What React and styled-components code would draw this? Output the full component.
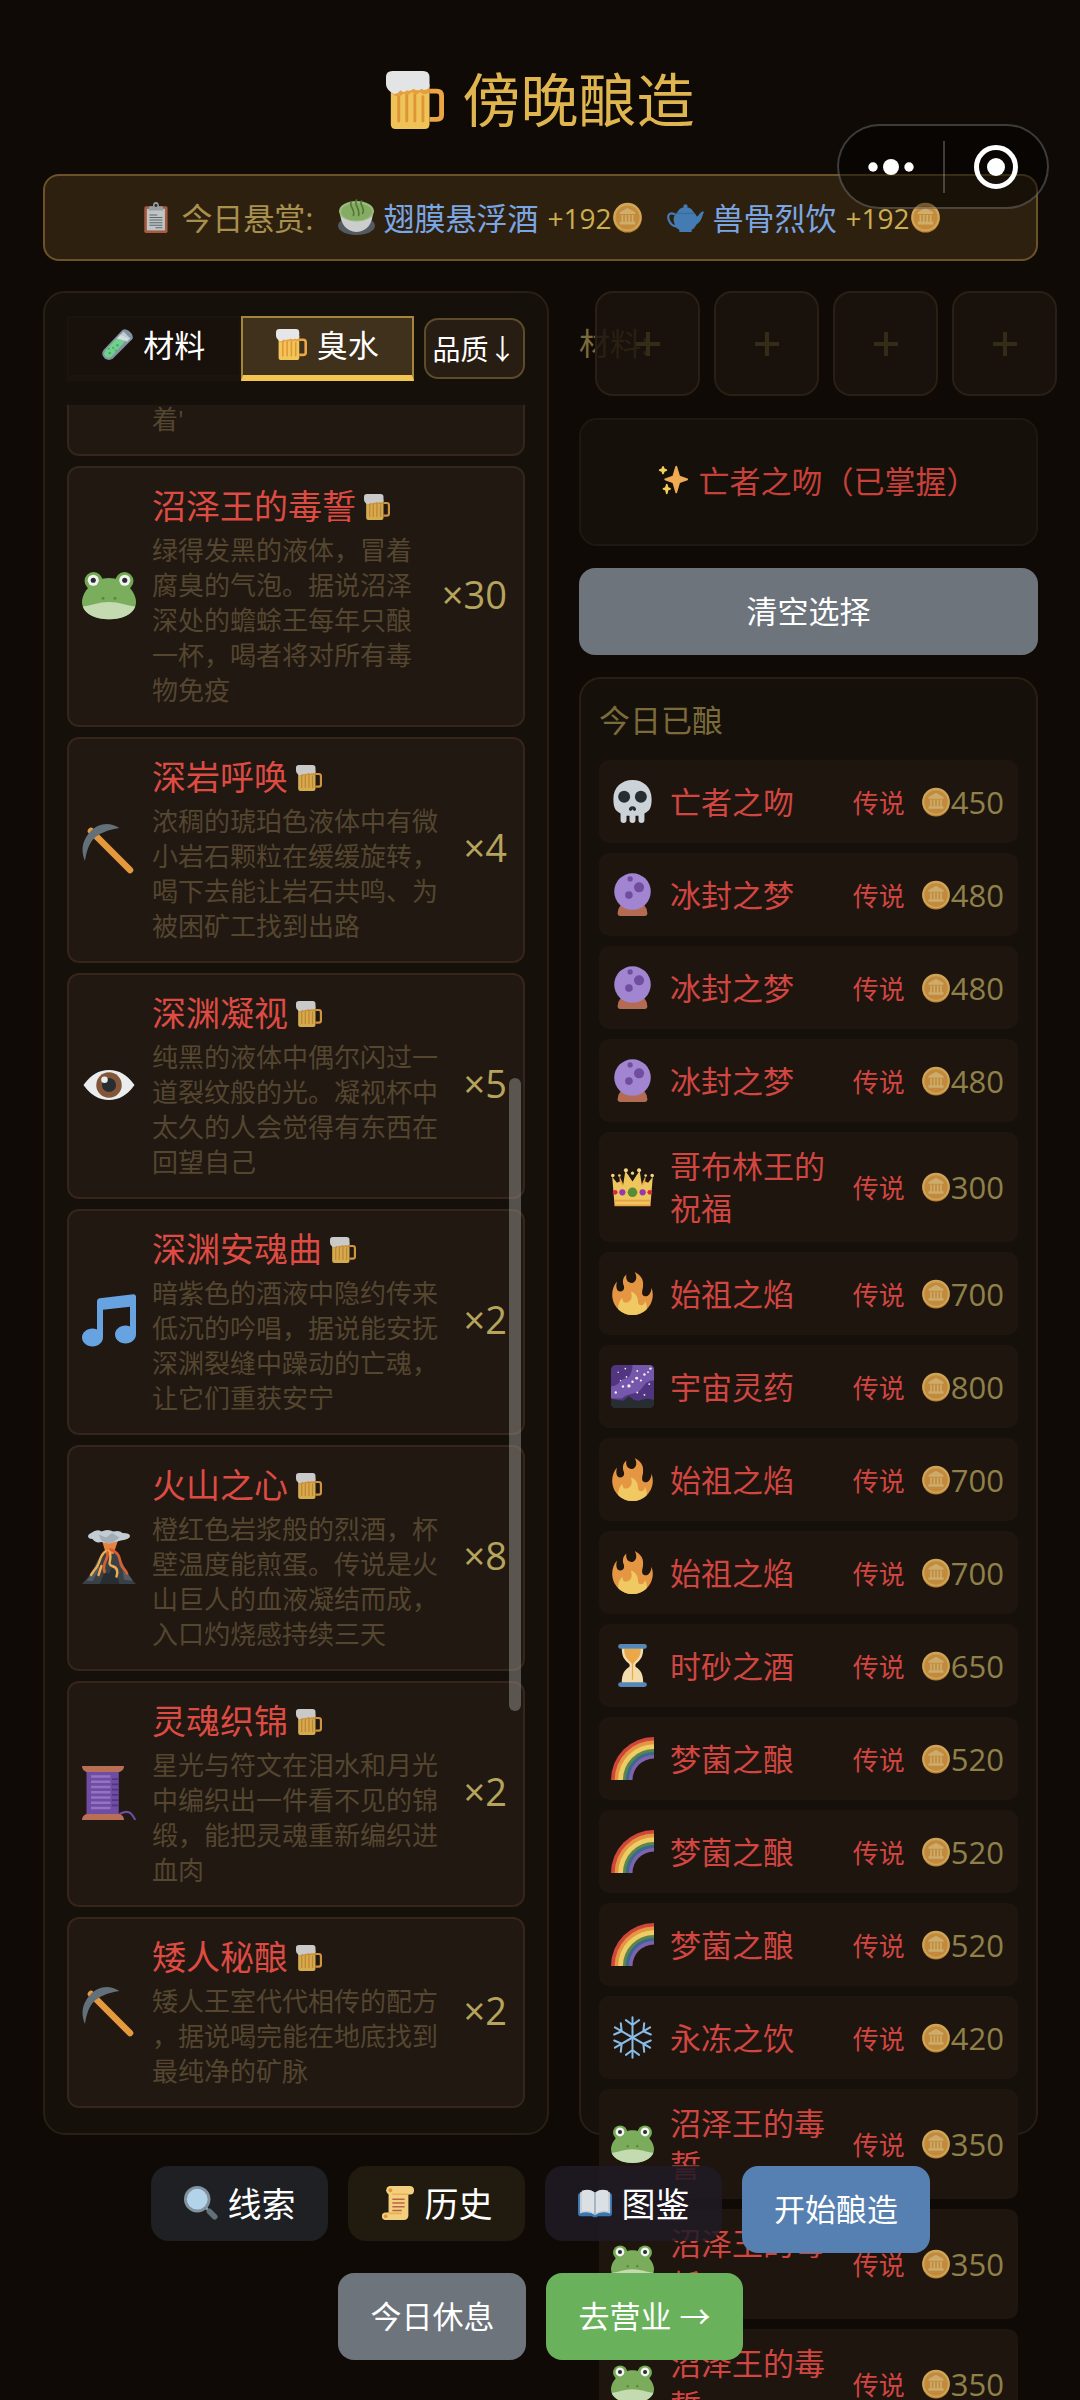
import { styled, createGlobalStyle } from "styled-components";

const GlobalStyle = createGlobalStyle`
  * {
    box-sizing: border-box;
  }

  body {
    margin: 0;
    background: #0f0a06;
  }

  h1, h2, h3, p, ul {
    margin: 0;
    padding: 0;
    font-weight: 400;
  }

  ul {
    list-style: none;
  }

  body, button {
    font-family: "Open Sans", "Noto Sans CJK SC", sans-serif;
  }

  button {
    border: none;
    padding: 0;
    cursor: pointer;
  }
`;

const Glyph = styled.svg`
  display: block;
  flex: none;
  width: ${({ $size }) => $size}px;
  height: ${({ $size }) => $size}px;
  opacity: ${({ $dim }) => ($dim ? 0.82 : 0.95)};
`;

const drawings = {
  beer: (
    <>
      <path fill="none" stroke="#f7ae4b" strokeWidth="3" d="M27 12.500h4.500q3 0 3 3v12q0 2.500-3 2.500H27" />
      <path fill="#fbcd5c" d="M3 8h24v25q0 3-3 3H6q-3 0-3-3z" />
      <g fill="#ea9c3c">
        <rect x="7" y="15" width="1.800" height="17" rx="0.900" />
        <rect x="12" y="14" width="1.800" height="18" rx="0.900" />
        <rect x="17" y="14" width="1.800" height="18" rx="0.900" />
        <rect x="22" y="15" width="1.800" height="17" rx="0.900" />
      </g>
      <path fill="#f0a842" d="M3 11h24v2q-3 3-6 0-2 3-5 0-2 3-5 1-4 4-8-1z" />
      <path fill="#eef0f2" d="M4 0h19q4 0 4 4v6q-2 3-5 1-2 2-5 0-2 2-4 1-2 2-4 0-3 4-6 1Q0 11 0 8V4q0-4 4-4z" />
    </>
  ),
  clipboard: (
    <>
      <rect x="5" y="5" width="27" height="31" rx="2" fill="#c1694f" />
      <path fill="#e1e8ed" d="M8 8h21v25H8z" />
      <path fill="#b0bac2" d="M12 5h3q0-5 3.500-5T22 5h3q2 0 2 2v3H10V7q0-2 2-2z" />
      <circle cx="18.500" cy="4" r="1.700" fill="#292f33" />
      <path stroke="#66757f" strokeWidth="1.200" d="M11 15h9M11 18h15M11 21h15M11 24h15M11 27h15M18 30h8" />
    </>
  ),
  tea: (
    <>
      <ellipse cx="18" cy="26" rx="18" ry="9" fill="#5a6872" />
      <path fill="#f0f4f7" d="M2 12h32c0 12-6 20-16 20S2 24 2 12z" />
      <ellipse cx="18" cy="12" rx="17" ry="10" fill="#b5dd97" />
      <ellipse cx="18" cy="12.500" rx="15" ry="8.500" fill="#98cc76" />
      <path fill="none" stroke="#5c8a42" strokeWidth="1.600" strokeLinecap="round" d="M13 3c-3 4 4 6 2 13M18 1c-3 5 4 8 2 15M23 2c-3 4 4 6 1 12" />
    </>
  ),
  teapot: (
    <>
      <path fill="none" stroke="#4a8fd6" strokeWidth="2.200" d="M8 15C2 12 0 16 2 21q2 5 8 6" />
      <path fill="#4a8fd6" d="M27 18c4 0 4-5 8-6l1 1c-2 3-2 11-10 13z" />
      <circle cx="18" cy="7" r="2" fill="#4a8fd6" />
      <path fill="#4a8fd6" d="M10 13q2-5 8-5t8 5q5 4 3 10-1 5-5 7v2H12v-2q-4-2-5-7-2-6 3-10z" />
      <path stroke="#3a78b4" strokeWidth="1" d="M9 14h18" />
    </>
  ),
  coin: (
    <>
      <circle cx="18" cy="19" r="16.500" fill="#e09d3c" />
      <circle cx="18" cy="17.500" r="16.500" fill="#f5c468" />
      <circle cx="18" cy="18" r="14" fill="#e5a447" />
      <path fill="#f3cd80" d="M18 7l9 5v2H9v-2zM11 15h2v8h-2zM15 15h2v8h-2zM19 15h2v8h-2zM23 15h2v8h-2zM9 23h18v3H9z" />
    </>
  ),
  tube: (
    <>
      <path fill="#8899a6" d="M24 1q3-2 7 1l3 3q3 4 1 7L13 34q-5 4-10 0-5-5-1-10z" />
      <path fill="#ccd6dd" d="M25 3l8 8-4 4-9-7z" />
      <path fill="#74dc92" d="M17 11l11 2-17 19q-4 3-7 0t0-7z" />
      <path fill="#e1e8ed" d="M17 11l4-4 10 4-3 3z" />
      <g fill="#4ab36c">
        <circle cx="9" cy="28" r="1.500" />
        <circle cx="13" cy="22" r="1.300" />
        <circle cx="18" cy="19" r="1.500" />
        <circle cx="16" cy="25" r="1.200" />
        <circle cx="8" cy="23" r="1.200" />
      </g>
    </>
  ),
  frog: (
    <>
      <circle cx="7.700" cy="8" r="6" fill="#77b255" />
      <circle cx="28.300" cy="8" r="6" fill="#77b255" />
      <path fill="#7fb561" d="M36 22c0 7-8 11.500-18 11.500S0 29 0 22 8 6 18 6s18 9 18 16z" />
      <path fill="#cde6bb" d="M.5 25C6 24.500 11 22 18 22s12 2.500 17.500 3c-2 5.500-9 8.500-17.500 8.500S2.500 30.500.5 25z" />
      <circle cx="7.500" cy="7.500" r="3.700" fill="#fff" />
      <circle cx="28.500" cy="7.500" r="3.700" fill="#fff" />
      <circle cx="7.500" cy="7.500" r="1.700" fill="#292f33" />
      <circle cx="28.500" cy="7.500" r="1.700" fill="#292f33" />
      <circle cx="14" cy="19.500" r="1" fill="#5c913b" />
      <circle cx="22" cy="19.500" r="1" fill="#5c913b" />
    </>
  ),
  pick: (
    <>
      <path stroke="#f0a040" strokeWidth="4.400" strokeLinecap="round" d="M6 6l26 26" />
      <path fill="#66757f" d="M25 4C17-1 10 2 6 6S-2 17 2 26c1-7 3-12 6-15S17 5 25 4z" />
    </>
  ),
  eye: (
    <>
      <path fill="#f5f8fa" d="M1 18Q8 8 18 8t17 10Q28 28 18 28T1 18z" />
      <circle cx="18" cy="18" r="8.500" fill="#8a5a3c" />
      <circle cx="18" cy="18" r="4.700" fill="#292f33" />
      <circle cx="15" cy="14.500" r="2.200" fill="#f5f8fa" />
    </>
  ),
  music: (
    <path
      fill="#6aabec"
      d="M34.209.206L11.791 2.793C10.806 2.907 10 3.811 10 4.803v18.782C9.090 23.214 8.075 23 7 23c-3.865 0-7 2.685-7 6 0 3.314 3.135 6 7 6s7-2.686 7-6V10.539l18-2.077v13.124c-.91-.372-1.925-.586-3-.586-3.865 0-7 2.685-7 6 0 3.314 3.135 6 7 6s7-2.686 7-6V1.803c0-.992-.806-1.710-1.791-1.597z"
    />
  ),
  volcano: (
    <>
      <path fill="#3b4349" d="M0 36Q6 30 9 23q3-7 7-9h5q4 2 6 9 3 8 9 13z" />
      <path fill="#292f33" d="M12 36l3-8 3 1 2-4 3 4 2 7z" />
      <path fill="#55606a" d="M5 31l5-8 2 2-5 9H3zM26 20l4 8 4 6-6-1z" />
      <path fill="#f58743" d="M13 6l11 1-3 9h-5z" />
      <path fill="none" stroke="#fbb555" strokeWidth="1.600" strokeLinecap="round" d="M16 14c-5 3-3 8-8 13l-2 3M18 14c3 5-2 9 2 10s4 4 3 7M13 24l-2 6" />
      <path fill="none" stroke="#e06434" strokeWidth="1.800" strokeLinecap="round" d="M19 13c6 2 6 6 7 10 1 3 3 3 4 6M17 15c1 5-4 6-2 13" />
      <path fill="#ccd6dd" d="M6 2q4-3 7-1 4-2 8 0 4-1 6 1 5 0 5 2t-6 3l-4 1-4 1-5-1q-4 1-6-2-3 0-3-2 0-1 2-2z" />
      <path fill="#a9b6c0" d="M11 3l5 2 4-3 5 3-4 3-4 1-4-2z" />
    </>
  ),
  thread: (
    <>
      <path fill="none" stroke="#744eaa" strokeWidth="1.400" d="M25 32c6-3 8-1 10.500 4" />
      <path fill="#7450ab" d="M3 3h21.500v29H3z" />
      <path stroke="#9b78cf" strokeWidth="1.700" d="M6 7h13M6 10.500h13M6 14h13M6 17.500h13M6 21h13M6 24.500h13M6 28h13" />
      <path stroke="#553788" strokeWidth="1.200" d="M20 8.700h4.500M20 12.200h4.500M20 15.700h4.500M20 19.200h4.500M20 22.700h4.500M20 26.200h4.500" />
      <path fill="#c1745a" d="M0 0h28q0 3-3 4H3Q0 3 0 0zM3 32h22q3 1 3 4H0q0-3 3-4z" />
    </>
  ),
  sparkles: (
    <>
      <path
        fill="#fcb456"
        d="M34.347 16.893l-8.899-3.294-3.323-10.891c-.128-.42-.517-.708-.956-.708-.439 0-.828.288-.956.708l-3.322 10.891-8.900 3.294c-.393.146-.653.519-.653.938 0 .418.26.793.653.938l8.895 3.293 3.324 11.223c.126.424.516.715.959.715.442 0 .833-.291.959-.716l3.324-11.223 8.896-3.293c.391-.144.652-.518.652-.937 0-.418-.261-.792-.653-.938z"
      />
      <path
        fill="#ffd95e"
        d="M14.347 27.894l-2.314-.856-.9-3.300c-.118-.436-.513-.738-.964-.738-.451 0-.846.302-.965.737l-.9 3.300-2.313.856c-.393.146-.653.52-.653.938 0 .418.26.792.653.938l2.301.853.907 3.622c.112.444.511.756.97.756.459 0 .858-.312.97-.757l.907-3.622 2.301-.853c.393-.144.653-.519.653-.937 0-.418-.26-.792-.653-.937zM10.009 6.231l-2.364-.875-.876-2.365c-.145-.393-.519-.653-.938-.653-.418 0-.792.26-.938.653l-.875 2.365-2.365.875c-.393.146-.653.52-.653.938 0 .418.26.792.653.938l2.365.875.875 2.365c.146.393.52.653.938.653.418 0 .792-.26.938-.653l.875-2.365 2.365-.875c.393-.146.653-.52.653-.938 0-.418-.26-.792-.653-.938z"
      />
    </>
  ),
  skull: (
    <>
      <path fill="#d5dde3" d="M34 16C34 6 27 0 18 0S2 6 2 16c0 6 1 10 6 12v5.500a2.500 2.500 0 005 0V30h2.500v3.500a2.500 2.500 0 005 0V30H23v3.500a2.500 2.500 0 005 0V28c5-2 6-6 6-12z" />
      <circle cx="11" cy="14" r="5" fill="#292f33" />
      <circle cx="25" cy="14" r="5" fill="#292f33" />
      <path fill="#292f33" d="M15 25q0-3 3-3t3 3q-1.500 2-3-.5-1.500 2.500-3 .5z" />
    </>
  ),
  crystal: (
    <>
      <path fill="#bd7058" d="M8 27h20q2.500 3 2.500 7 0 2-2 2h-21q-2 0-2-2 0-4 2.500-7z" />
      <circle cx="18" cy="15.500" r="15.300" fill="#a98bdb" />
      <circle cx="23.500" cy="12" r="4.200" fill="#7650a8" />
      <circle cx="15" cy="18.500" r="3.200" fill="#7650a8" />
      <circle cx="16" cy="5" r="2.200" fill="#7650a8" />
    </>
  ),
  crown: (
    <>
      <path fill="#f5b04d" d="M7 8l4 9 3-10 4 8 4-8 3 10 4-9-1 16H8z" />
      <path fill="#fbcf62" d="M1 9l4 5 2-1 3 4 2-13 6 9 6-9 2 13 3-4 2 1 4-5-2 24H3z" />
      <g fill="#ffe08a">
        <circle cx="1.500" cy="8" r="1.500" />
        <circle cx="12.500" cy="3.500" r="1.700" />
        <circle cx="23.500" cy="3.500" r="1.700" />
        <circle cx="34.500" cy="8" r="1.500" />
        <circle cx="7" cy="8" r="1.100" />
        <circle cx="18" cy="6" r="1.300" />
        <circle cx="29" cy="8" r="1.100" />
      </g>
      <circle cx="18" cy="22" r="4" fill="#5c913b" />
      <circle cx="9.500" cy="22" r="2.600" fill="#9b3ab8" />
      <circle cx="26.500" cy="22" r="2.600" fill="#9b3ab8" />
      <circle cx="3.500" cy="22" r="2" fill="#dd2e44" />
      <circle cx="32.500" cy="22" r="2" fill="#dd2e44" />
      <path stroke="#f4a94a" strokeWidth="1.400" d="M3 29h30M3 33h30" />
    </>
  ),
  fire: (
    <>
      <path
        fill="#f09d45"
        d="M35 19c0-2.062-.367-4.039-1.040-5.868-.46 5.389-3.333 8.157-6.335 6.868-2.812-1.208-.917-5.917-.777-8.164.236-3.809-.012-8.169-6.931-11.794 2.875 5.500.333 8.917-2.333 9.125-2.958.231-5.667-2.542-4.667-7.042-3.238 2.386-3.332 6.402-2.333 9 1.042 2.708-.042 4.958-2.583 5.208-2.840.28-4.418-3.041-2.963-8.333C2.520 10.965 1 14.805 1 19c0 9.389 7.611 17 17 17s17-7.611 17-17z"
      />
      <path
        fill="#fdd367"
        d="M28.394 23.999c.148 3.084-2.561 4.293-4.019 3.709-2.106-.843-1.541-2.291-2.083-5.291s-2.625-5.083-5.708-6c2.250 6.333-1.247 8.667-3.080 9.084-1.872.426-3.753-.001-3.968-4.007C7.352 23.668 6 26.676 6 30c0 .368.023.73.055 1.090C9.125 34.124 13.342 36 18 36s8.875-1.876 11.945-4.910c.032-.36.055-.722.055-1.090 0-2.187-.584-4.236-1.606-6.001z"
      />
    </>
  ),
  galaxy: (
    <>
      <rect width="36" height="36" rx="4" fill="#553788" />
      <path fill="#7a5bb5" d="M18 0h14q4 0 4 4v9q-6 0-9 5t-9 6-9 4H0V18q6-1 8-5 3-2 6-2 4-4 4-11z" />
      <g fill="#fff">
        <circle cx="15" cy="17.500" r="1.400" />
        <circle cx="21.500" cy="11" r="1.200" />
        <circle cx="28" cy="8" r="1" />
        <circle cx="18" cy="14" r="1" />
        <circle cx="10" cy="18" r="1" />
        <circle cx="25" cy="13" r="0.900" />
        <circle cx="33" cy="3" r="1" />
        <circle cx="12" cy="3" r="0.700" />
        <circle cx="6" cy="6" r="0.600" />
        <circle cx="32" cy="16" r="0.800" />
        <circle cx="22" cy="23" r="0.800" />
        <circle cx="28" cy="25" r="0.800" />
        <circle cx="4" cy="23" r="1" />
        <circle cx="13" cy="10" r="0.700" />
        <circle cx="22" cy="5" r="0.800" />
        <circle cx="31" cy="6" r="0.800" />
        <circle cx="8" cy="13" r="0.600" />
      </g>
      <path fill="#292f33" d="M0 28l4 1 6 1 5-4 4 3 4 1 7-2 6 1v3q0 4-4 4H4q-4 0-4-4z" />
    </>
  ),
  hourglass: (
    <>
      <path fill="#ffe8b6" d="M9 3h18c0 8-2 10-6.500 14v2C25 22 27 25 27 33H9c0-8 2-11 6.500-14v-2C11 13 9 11 9 3z" />
      <path fill="#f8b04c" d="M11 4h14c0 6-2 8-6.500 12.500V30h-1V16.500C13 12 11 10 11 4z" />
      <rect x="6" width="24" height="4" rx="2" fill="#5a8ebf" />
      <rect x="6" y="32" width="24" height="4" rx="2" fill="#5a8ebf" />
    </>
  ),
  rainbow: (
    <>
      <path fill="#d94a3c" d="M36 0A36 36 0 000 36h36z" />
      <path fill="#f09d45" d="M36 3A33 33 0 003 36h33z" />
      <path fill="#fbd76a" d="M36 6A30 30 0 006 36h30z" />
      <path fill="#5f8d4e" d="M36 10A26 26 0 0010 36h26z" />
      <path fill="#3c6c9e" d="M36 12.500A23.500 23.500 0 0012.500 36H36z" />
      <path fill="#8468b4" d="M36 15A21 21 0 0015 36h21z" />
      <path fill="#1e150f" d="M36 18A18 18 0 0018 36h18z" />
    </>
  ),
  snow: (
    <g fill="none" stroke="#8ec5f2" strokeWidth="1.700" strokeLinecap="round">
      {[0, 60, 120, 180, 240, 300].map((deg) => (
        <path key={deg} transform={`rotate(${deg} 18 18)`} d="M18 18V1M18 7.500l-5.500-4M18 7.500l5.500-4" />
      ))}
    </g>
  ),
  search: (
    <>
      <path stroke="#66757f" strokeWidth="6" strokeLinecap="round" d="M27 27l5.500 5.500" />
      <path stroke="#99aab5" strokeWidth="3" d="M21 21l4 4" />
      <circle cx="14" cy="14" r="14" fill="#8899a6" />
      <circle cx="14" cy="14" r="11" fill="#bbddf5" />
    </>
  ),
  scroll: (
    <>
      <path fill="#ffd983" d="M9 0h21q5 0 5 4.500T31 9h-2v22q0 5-5 5H5q-4 0-4-4t4-4h3V5z" />
      <circle cx="10" cy="4.500" r="4.500" fill="#ffd983" />
      <circle cx="10" cy="4.500" r="2" fill="#e39f3d" />
      <circle cx="5" cy="32" r="2" fill="#e39f3d" />
      <path fill="#f4b85a" d="M12 8h17v1.500H12zM8 28h14v2H8z" />
      <path stroke="#c1694f" strokeWidth="1.500" d="M12 14h13M12 18h13M12 22h13M12 26h10" />
    </>
  ),
  book: (
    <>
      <path fill="#3b7cb8" d="M1 8h34q1 0 1 2v19q0 3-3 3H21l-1 1h-4l-1-1H3q-3 0-3-3V10q0-2 1-2z" />
      <path fill="#ccd6dd" d="M2 7Q12 2 18 7q6-5 16 0v22q-10-3-16 2-6-5-16-2z" />
      <path fill="#e6ebef" d="M4 5q9-3 13 2v22q-5-4-13-2zM32 5q-9-3-13 2v22q5-4 13-2z" />
      <path stroke="#99aab5" strokeWidth="1.200" d="M18 7v24" />
    </>
  ),
};

const Icon = ({ name, size, dim }) => (
  <Glyph viewBox="0 0 36 36" $size={size} $dim={dim} aria-hidden="true">
    {drawings[name]}
  </Glyph>
);

const Page = styled.div`
  position: relative;
  height: 100vh;
  display: flex;
  flex-direction: column;
  padding: 61px 42px 40px 43px;
  overflow: hidden;
`;

const PageTitle = styled.h1`
  display: flex;
  justify-content: center;
  align-items: center;
  gap: 18px;
  font-size: 58px;
  line-height: 78px;
  color: #deb54f;
`;

const Capsule = styled.div`
  position: absolute;
  top: 124px;
  right: 31px;
  z-index: 3;
  display: flex;
  align-items: center;
  height: 85px;
  border: 2px solid rgba(255, 255, 255, 0.22);
  border-radius: 43px;
  background: rgba(0, 0, 0, 0.45);
`;

const CapsuleButton = styled.button`
  display: flex;
  align-items: center;
  justify-content: center;
  width: 104px;
  height: 52px;
  background: none;

  & + & {
    border-left: 2px solid rgba(255, 255, 255, 0.22);
  }
`;

const BountyBar = styled.section`
  display: flex;
  justify-content: center;
  align-items: center;
  gap: 24px;
  height: 87px;
  flex: none;
  margin-top: 35px;
  border: 2px solid #6b5229;
  border-radius: 16px;
  background: #2d200f;
  font-size: 31px;
  line-height: 42px;
  white-space: nowrap;
`;

const BountyLabel = styled.div`
  display: flex;
  align-items: center;
  gap: 10px;
  color: #a8904f;
`;

const Bounty = styled.div`
  display: flex;
  align-items: center;
  gap: 9px;
  color: #7ba6e4;
`;

const Reward = styled.span`
  display: flex;
  align-items: center;
  font-size: 28px;
  color: #cdae4f;
`;

const Columns = styled.main`
  flex: 1;
  min-height: 0;
  display: grid;
  grid-template-columns: 506fr 459fr;
  gap: 30px;
  margin-top: 30px;
`;

const StockPanel = styled.section`
  min-width: 0;
  min-height: 0;
  display: flex;
  flex-direction: column;
  gap: 24px;
  padding: 23px 22px 25px;
  border: 2px solid #291f15;
  border-radius: 22px;
  background: #15100a;
`;

const Toolbar = styled.div`
  display: flex;
  align-items: center;
  gap: 10px;
`;

const Tabs = styled.div`
  flex: 1;
  display: flex;
`;

const Tab = styled.button`
  flex: 1;
  display: flex;
  align-items: center;
  justify-content: center;
  gap: 10px;
  height: 65px;
  padding-bottom: 4px;
  border: 2px solid ${({ $active }) => ($active ? "#a5853a" : "#1b130e")};
  border-bottom: 6px solid ${({ $active }) => ($active ? "#f3c651" : "#1b130e")};
  background: ${({ $active }) => ($active ? "#3f311b" : "#18100b")};
  color: #fff;
  font-size: 31px;
  line-height: 42px;
`;

const SortButton = styled.button`
  width: 101px;
  height: 61px;
  padding-bottom: 2px;
  border: 2px solid #5d4b29;
  border-radius: 14px;
  background: #281d13;
  color: #fff;
  font-size: 28px;
  white-space: nowrap;
`;

const ListFrame = styled.div`
  position: relative;
  flex: 1;
  min-height: 0;
  display: flex;
`;

const StockList = styled.ul`
  flex: 1;
  min-width: 0;
  display: flex;
  flex-direction: column;
  justify-content: flex-end;
  gap: 10px;
  overflow: hidden;
`;

const ScrollThumb = styled.span`
  position: absolute;
  top: 39.5%;
  right: 4px;
  width: 12px;
  height: 37.2%;
  border-radius: 6px;
  background: rgba(150, 146, 142, 0.5);
`;

const StockCard = styled.li`
  flex: none;
  display: flex;
  align-items: center;
  gap: 16px;
  padding: 15px 16px 17px 13px;
  border: 2px solid #35251a;
  border-radius: 12px;
  background: #211812;
`;

const StockIcon = styled.div`
  flex: none;
  width: 54px;
`;

const StockBody = styled.div`
  flex: 1;
  min-width: 0;
`;

const StockName = styled.h3`
  display: flex;
  align-items: center;
  gap: 8px;
  min-height: 47px;
  font-size: 34px;
  line-height: 47px;
  color: #dd4b43;
`;

const StockText = styled.p`
  margin-top: 3px;
  font-size: 26px;
  line-height: 35px;
  line-break: anywhere;
  color: #54462f;
`;

const StockCount = styled.span`
  flex: none;
  padding-bottom: 4px;
  font-size: 38px;
  color: #b6a45c;
`;

const BrewColumn = styled.div`
  min-width: 0;
  min-height: 0;
  display: flex;
  flex-direction: column;
  gap: 22px;
`;

const SlotRow = styled.div`
  display: flex;
  align-items: center;
  gap: 16px;
`;

/* the label takes no room, the slots slide over it */
const SlotLabel = styled.span`
  width: 0;
  padding-bottom: 4px;
  font-size: 31px;
  white-space: nowrap;
  color: #7b6a3a;
`;

const Slots = styled.div`
  position: relative;
  display: flex;
  gap: 14px;
`;

const Slot = styled.button`
  flex: none;
  width: 105px;
  height: 105px;
  border: 2px solid #2a1f15;
  border-radius: 18px;
  background: rgba(27, 19, 13, 0.85);
  color: #352c17;
  display: flex;
  align-items: center;
  justify-content: center;
`;

const ResultCard = styled.div`
  display: flex;
  align-items: center;
  justify-content: center;
  gap: 10px;
  height: 128px;
  padding: 0 0 6px 18px;
  border: 2px solid #201712;
  border-radius: 18px;
  background: #15100a;
  font-size: 31px;
  color: #c8403a;
`;

const ActionButton = styled.button`
  height: 87px;
  padding: 0 32px 4px;
  border-radius: 16px;
  background: ${({ $color }) => $color};
  color: #fff;
  font-size: 31px;
  white-space: nowrap;
`;

const BrewedPanel = styled.section`
  flex: 1;
  min-height: 0;
  padding: 20px 18px;
  border: 2px solid #2a1e14;
  border-radius: 22px;
  background: #15100a;
`;

const BrewedHeading = styled.h2`
  margin-bottom: 19px;
  font-size: 31px;
  line-height: 42px;
  color: #7b6a3a;
`;

const BrewedList = styled.ul`
  display: flex;
  flex-direction: column;
  gap: 10px;
`;

const BrewedRow = styled.li`
  display: flex;
  align-items: center;
  gap: 16px;
  min-height: 83px;
  padding: 13px 14px 13px 12px;
  border-radius: 10px;
  background: #1e150f;
  color: #d14640;
`;

const BrewedName = styled.span`
  flex: 1;
  font-size: 31px;
  line-height: 42px;
`;

const Rarity = styled.span`
  flex: none;
  font-size: 26px;
`;

const Price = styled.span`
  flex: none;
  display: flex;
  align-items: center;
  font-size: 31px;
  line-height: 42px;
  color: #8f8148;
`;

const Footer = styled.footer`
  position: relative;
  z-index: 2;
  display: flex;
  flex-wrap: wrap;
  justify-content: center;
  align-items: flex-start;
  gap: 20px;
  margin-top: 31px;
  padding: 0 90px;
`;

const LinkButton = styled.button`
  display: flex;
  align-items: center;
  justify-content: center;
  gap: 10px;
  width: 177px;
  height: 75px;
  padding-bottom: 2px;
  border-radius: 18px;
  background: ${({ $color }) => $color};
  color: #fff;
  font-size: 34px;
`;

const stock = [
  { text: "着'" },
  {
    icon: "frog",
    name: "沼泽王的毒誓",
    text: "绿得发黑的液体，冒着腐臭的气泡。据说沼泽深处的蟾蜍王每年只酿一杯，喝者将对所有毒物免疫",
    count: 30,
  },
  {
    icon: "pick",
    name: "深岩呼唤",
    text: "浓稠的琥珀色液体中有微小岩石颗粒在缓缓旋转，喝下去能让岩石共鸣、为被困矿工找到出路",
    count: 4,
  },
  {
    icon: "eye",
    name: "深渊凝视",
    text: "纯黑的液体中偶尔闪过一道裂纹般的光。凝视杯中太久的人会觉得有东西在回望自己",
    count: 5,
  },
  {
    icon: "music",
    name: "深渊安魂曲",
    text: "暗紫色的酒液中隐约传来低沉的吟唱，据说能安抚深渊裂缝中躁动的亡魂，让它们重获安宁",
    count: 2,
  },
  {
    icon: "volcano",
    name: "火山之心",
    text: "橙红色岩浆般的烈酒，杯壁温度能煎蛋。传说是火山巨人的血液凝结而成，入口灼烧感持续三天",
    count: 8,
  },
  {
    icon: "thread",
    name: "灵魂织锦",
    text: "星光与符文在泪水和月光中编织出一件看不见的锦缎，能把灵魂重新编织进血肉",
    count: 2,
  },
  {
    icon: "pick",
    name: "矮人秘酿",
    text: "矮人王室代代相传的配方，据说喝完能在地底找到最纯净的矿脉",
    count: 2,
  },
];

const brewed = [
  ["skull", "亡者之吻", 450],
  ["crystal", "冰封之梦", 480],
  ["crystal", "冰封之梦", 480],
  ["crystal", "冰封之梦", 480],
  ["crown", "哥布林王的祝福", 300],
  ["fire", "始祖之焰", 700],
  ["galaxy", "宇宙灵药", 800],
  ["fire", "始祖之焰", 700],
  ["fire", "始祖之焰", 700],
  ["hourglass", "时砂之酒", 650],
  ["rainbow", "梦菌之酿", 520],
  ["rainbow", "梦菌之酿", 520],
  ["rainbow", "梦菌之酿", 520],
  ["snow", "永冻之饮", 420],
  ["frog", "沼泽王的毒誓", 350],
  ["frog", "沼泽王的毒誓", 350],
  ["frog", "沼泽王的毒誓", 350],
];

const bounties = [
  { icon: "tea", name: "翅膜悬浮酒", reward: 192 },
  { icon: "teapot", name: "兽骨烈饮", reward: 192 },
];

const App = () => {
  return (
    <Page>
      <GlobalStyle />
      <PageTitle>
        <Icon name="beer" size={58} />
        傍晚酿造
      </PageTitle>

      <Capsule>
        <CapsuleButton aria-label="更多">
          <svg width="46" height="18" viewBox="0 0 46 18" fill="#fff">
            <circle cx="5" cy="9" r="4.700" />
            <circle cx="23" cy="9" r="8" />
            <circle cx="41" cy="9" r="4.700" />
          </svg>
        </CapsuleButton>
        <CapsuleButton aria-label="关闭">
          <svg width="44" height="44" viewBox="0 0 44 44">
            <circle cx="22" cy="22" r="19.500" fill="none" stroke="#fff" strokeWidth="5" />
            <circle cx="22" cy="22" r="9" fill="#fff" />
          </svg>
        </CapsuleButton>
      </Capsule>

      <BountyBar>
        <BountyLabel>
          <Icon name="clipboard" size={31} dim />
          今日悬赏:
        </BountyLabel>
        {bounties.map(({ icon, name, reward }) => (
          <Bounty key={name}>
            <Icon name={icon} size={37} dim />
            {name}
            <Reward>
              +{reward}
              <Icon name="coin" size={31} dim />
            </Reward>
          </Bounty>
        ))}
      </BountyBar>

      <Columns>
        <StockPanel>
          <Toolbar>
            <Tabs>
              <Tab>
                <Icon name="tube" size={31} />
                材料
              </Tab>
              <Tab $active>
                <Icon name="beer" size={31} />
                臭水
              </Tab>
            </Tabs>
            <SortButton>品质↓</SortButton>
          </Toolbar>
          <ListFrame>
            <StockList>
              {stock.map(({ icon, name, text, count }) => (
                <StockCard key={text}>
                  <StockIcon>{icon && <Icon name={icon} size={54} />}</StockIcon>
                  <StockBody>
                    <StockName>
                      {name}
                      {name && <Icon name="beer" size={26} dim />}
                    </StockName>
                    <StockText>{text}</StockText>
                  </StockBody>
                  {count && <StockCount>×{count}</StockCount>}
                </StockCard>
              ))}
            </StockList>
            <ScrollThumb />
          </ListFrame>
        </StockPanel>

        <BrewColumn>
          <SlotRow>
            <SlotLabel>材料:</SlotLabel>
            <Slots>
              {[1, 2, 3, 4].map((slot) => (
                <Slot key={slot}>
                  <svg width="26" height="26" viewBox="0 0 26 26" stroke="currentColor" strokeWidth="4">
                    <path d="M13 1v24M1 13h24" />
                  </svg>
                </Slot>
              ))}
            </Slots>
          </SlotRow>
          <ResultCard>
            <Icon name="sparkles" size={31} />
            亡者之吻（已掌握）
          </ResultCard>
          <ActionButton $color="#6d747c">清空选择</ActionButton>
          <BrewedPanel>
            <BrewedHeading>今日已酿</BrewedHeading>
            <BrewedList>
              {brewed.map(([icon, name, price], index) => (
                <BrewedRow key={index}>
                  <Icon name={icon} size={43} />
                  <BrewedName>{name}</BrewedName>
                  <Rarity>传说</Rarity>
                  <Price>
                    <Icon name="coin" size={30} dim />
                    {price}
                  </Price>
                </BrewedRow>
              ))}
            </BrewedList>
          </BrewedPanel>
        </BrewColumn>
      </Columns>

      <Footer>
        <LinkButton $color="rgba(33, 36, 41, 0.85)">
          <Icon name="search" size={34} />
          线索
        </LinkButton>
        <LinkButton $color="rgba(37, 29, 17, 0.85)">
          <Icon name="scroll" size={34} />
          历史
        </LinkButton>
        <LinkButton $color="rgba(32, 26, 36, 0.85)">
          <Icon name="book" size={34} />
          图鉴
        </LinkButton>
        <ActionButton $color="#5680b1">开始酿造</ActionButton>
        <ActionButton $color="#6d747c">今日休息</ActionButton>
        <ActionButton $color="#69b25b">去营业 →</ActionButton>
      </Footer>
    </Page>
  );
};

export default App;
